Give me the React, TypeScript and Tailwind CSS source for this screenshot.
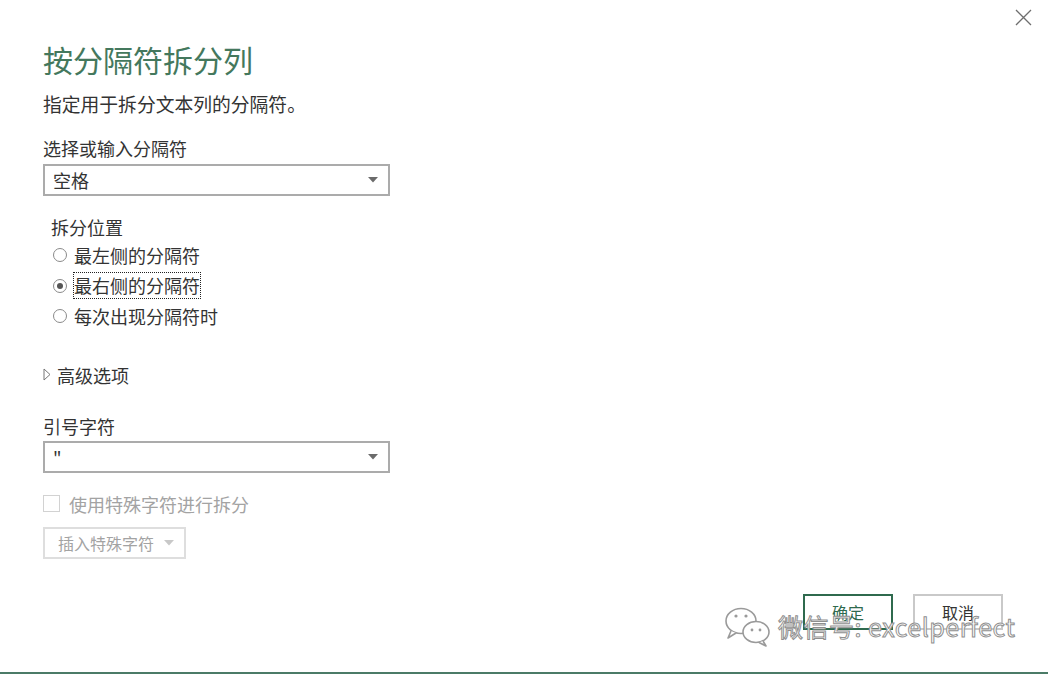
import React from "react";

const cjk = "font-['Microsoft_YaHei','Noto_Sans_CJK_SC','Noto_Sans',sans-serif]";

function Caret({ color = "#6b6b6b" }: { color?: string }) {
  return (
    <svg width="10" height="6" viewBox="0 0 10 6">
      <path d="M0 0 L10 0 L5 5.5 Z" fill={color} />
    </svg>
  );
}

function Select({ value }: { value: string }) {
  return (
    <div className="flex h-[32px] w-[347px] items-center justify-between border-2 border-[#ababab] bg-white pl-[8px] pr-[10px]">
      <span className="text-[18px] leading-none text-[#333]">{value}</span>
      <Caret />
    </div>
  );
}

function Radio({ label, checked, focused }: { label: string; checked?: boolean; focused?: boolean }) {
  return (
    <div className="flex h-[30.5px] items-center">
      <span className="mr-[6px] flex h-[14px] w-[14px] items-center justify-center rounded-full border border-[#8a8a8a] bg-white">
        {checked ? <span className="h-[6px] w-[6px] rounded-full bg-[#555]" /> : null}
      </span>
      <span
        className={
          focused
            ? "border border-dotted border-[#222] text-[18px] leading-[25px] text-[#333]"
            : "border border-transparent text-[18px] leading-[25px] text-[#333]"
        }
      >
        {label}
      </span>
    </div>
  );
}

function WeChatIcon() {
  return (
    <svg width="50" height="44" viewBox="0 0 50 44" fill="none">
      <ellipse cx="18" cy="17" rx="15" ry="12.5" fill="white" stroke="#9a9a9a" strokeWidth="1.6" />
      <path d="M8 27 L5 34 L13 29" fill="white" stroke="#9a9a9a" strokeWidth="1.6" strokeLinejoin="round" />
      <circle cx="13" cy="12" r="1.6" fill="#9a9a9a" />
      <circle cx="23" cy="12" r="1.6" fill="#9a9a9a" />
      <ellipse cx="33" cy="28" rx="13" ry="10.5" fill="white" stroke="#9a9a9a" strokeWidth="1.6" />
      <path d="M40 37 L43 42 L36 38.5" fill="white" stroke="#9a9a9a" strokeWidth="1.6" strokeLinejoin="round" />
      <circle cx="29" cy="26" r="1.4" fill="#9a9a9a" />
      <circle cx="37" cy="26" r="1.4" fill="#9a9a9a" />
    </svg>
  );
}

export default function App() {
  return (
    <div className={`relative flex h-[674px] w-[1048px] flex-col overflow-hidden border-b-2 border-[#4b7b67] bg-white ${cjk}`}>
      {/* close */}
      <button className="absolute right-[16px] top-[9px]">
        <svg width="17" height="17" viewBox="0 0 17 17">
          <path d="M1 1 L16 16 M16 1 L1 16" stroke="#6e6e6e" strokeWidth="1.3" />
        </svg>
      </button>

      <div className="flex flex-col pl-[43px] pt-[39px]">
        <h1 className="h-[40px] text-[30px] font-normal leading-[40px] text-[#44785d]">按分隔符拆分列</h1>
        <p className="mt-[12px] h-[26px] text-[18.8px] leading-[26px] text-[#333]">指定用于拆分文本列的分隔符。</p>

        <div className="mt-[19px] h-[24px] text-[18px] leading-[24px] text-[#333]">选择或输入分隔符</div>
        <div className="mt-[4px]">
          <Select value="空格" />
        </div>

        <div className="mt-[19px] h-[24px] pl-[8px] text-[18px] leading-[24px] text-[#333]">拆分位置</div>
        <div className="mt-[1px] flex flex-col pl-[10px]">
          <Radio label="最左侧的分隔符" />
          <Radio label="最右侧的分隔符" checked focused />
          <Radio label="每次出现分隔符时" />
        </div>

        <div className="mt-[31px] flex h-[24px] items-center">
          <svg width="8" height="13" viewBox="0 0 8 13" className="mr-[6px]">
            <path d="M1 1 L7 6.5 L1 12 Z" fill="white" stroke="#777" strokeWidth="1" />
          </svg>
          <span className="text-[18px] leading-[24px] text-[#333]">高级选项</span>
        </div>

        <div className="mt-[27px] h-[24px] text-[18px] leading-[24px] text-[#333]">引号字符</div>
        <div className="mt-[3px]">
          <Select value={'"'} />
        </div>

        <div className="mt-[19px] flex h-[24px] items-center">
          <span className="mr-[9px] h-[17px] w-[17px] border border-[#d2d2d2] bg-white" />
          <span className="text-[18px] leading-[24px] text-[#a3a3a3]">使用特殊字符进行拆分</span>
        </div>

        <div className="mt-[11px]">
          <div className="flex h-[32px] w-[143px] items-center border-2 border-[#dedede] pl-[13px]">
            <span className="text-[16px] leading-none text-[#a3a3a3]">插入特殊字符</span>
            <span className="ml-[10px]">
              <Caret color="#c8c8c8" />
            </span>
          </div>
        </div>
      </div>

      <div className="mt-[35px] flex justify-end gap-[20px] pr-[45px]">
        <button className="h-[36px] w-[90px] border-2 border-[#2f6a4e] bg-white text-[16px] text-[#2f6a4e]">确定</button>
        <button className="h-[36px] w-[90px] border-2 border-[#c9c9c9] bg-white text-[16px] text-[#333]">取消</button>
      </div>

      {/* watermark */}
      <div className="pointer-events-none absolute left-[723px] top-[604px] flex items-center">
        <WeChatIcon />
        <span className="ml-[5px] text-[25px] leading-none tracking-[0.5px] text-white [-webkit-text-stroke:1px_#8f8f8f] font-['Noto_Sans_CJK_SC','Liberation_Sans',sans-serif]">
          微信号: excelperfect
        </span>
      </div>
    </div>
  );
}
